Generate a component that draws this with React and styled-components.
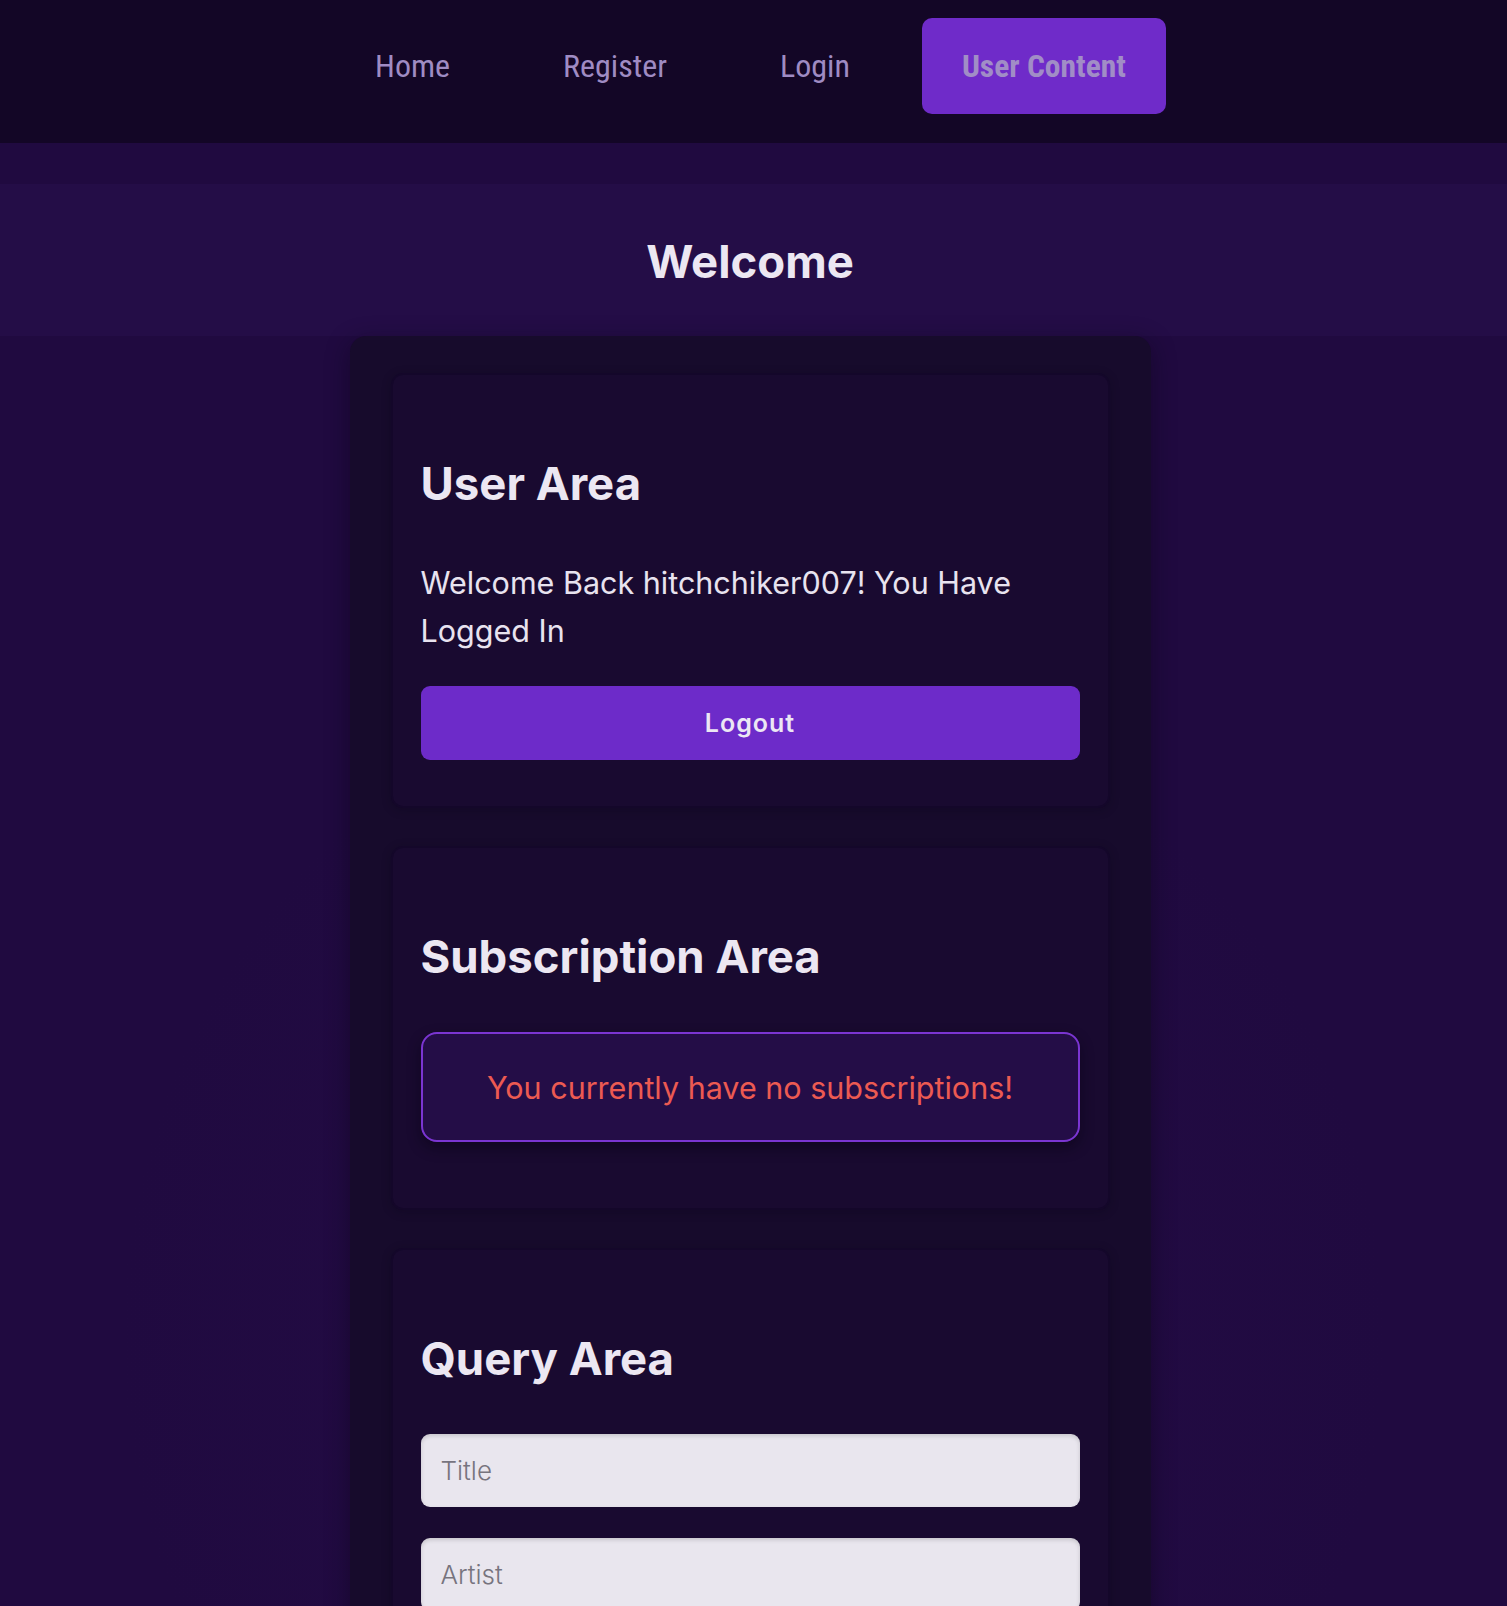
import React from "react";
import styled, { createGlobalStyle } from "styled-components";

const GlobalStyle = createGlobalStyle`
  * { box-sizing: border-box; }
  html, body {
    margin: 0;
    padding: 0;
    background: #200a40;
  }
  body {
    font-family: Inter, "Noto Sans", sans-serif;
    color: #ebe6f1;
    min-height: 100vh;
    background:
      radial-gradient(ellipse 60% 50% at 50% 70%, rgba(40, 14, 76, 0.55), rgba(32, 10, 64, 0) 70%),
      #200a40;
  }
`;

const Page = styled.div`
  display: flex;
  flex-direction: column;
  min-height: 100vh;
`;

const NavBar = styled.nav`
  background: #130626;
  padding: 18px 7px 29px 0;
  display: flex;
  justify-content: center;
  gap: 31px;
`;

const NavLink = styled.a`
  display: flex;
  align-items: center;
  justify-content: center;
  height: 96px;
  padding: 0 ${(p) => (p.$active ? 40 : 41)}px;
  border-radius: 10px;
  font-family: "Roboto Condensed", Roboto, sans-serif;
  font-stretch: condensed;
  font-size: ${(p) => (p.$active ? 31.5 : 32)}px;
  font-weight: ${(p) => (p.$active ? 700 : 400)};
  color: ${(p) => (p.$active ? "#a18dc6" : "#9f8bc3")};
  background: ${(p) => (p.$active ? "#6f2bc9" : "transparent")};
  text-decoration: none;
  cursor: pointer;
`;

const HeaderBand = styled.header`
  margin-top: 41px;
  background: #240d47;
  padding: 50px 7px 46px 0;
  text-align: center;
`;

const PageTitle = styled.h1`
  margin: 0;
  font-size: 45.5px;
  line-height: 56px;
  font-weight: 700;
  color: #ece7f2;
`;

const Panel = styled.main`
  align-self: center;
  width: 801px;
  margin-left: -7px;
  background: #170b2c;
  border-radius: 16px;
  padding: 37px 41px 60px;
  display: flex;
  flex-direction: column;
  gap: 38px;
  box-shadow: 0 6px 24px rgba(10, 2, 22, 0.45);
`;

const Card = styled.section`
  background: #190a30;
  border: 2px solid #14072a;
  border-radius: 12px;
  padding: 28px 28px ${(p) => p.$bottom || 28}px;
  display: flex;
  flex-direction: column;
  box-shadow: 0 2px 10px rgba(8, 2, 18, 0.25);
`;

const CardTitle = styled.h2`
  margin: 53px 0 47px;
  font-size: 45.5px;
  line-height: 56px;
  font-weight: 700;
  color: #ece7f2;
`;

const Message = styled.p`
  margin: 0 0 31px;
  font-size: 30.5px;
  line-height: 48px;
  font-weight: 400;
  color: #e8e3ef;
`;

const PrimaryButton = styled.button`
  height: 74px;
  width: 100%;
  border: none;
  border-radius: 9px;
  background: #6d2bc9;
  color: #ece7f4;
  font-family: Inter, sans-serif;
  font-size: 25px;
  font-weight: 600;
  letter-spacing: 1px;
  cursor: pointer;
`;

const NoticeBox = styled.div`
  height: 110px;
  border: 2px solid #7b35d2;
  border-radius: 16px;
  background: #240d47;
  display: flex;
  align-items: center;
  justify-content: center;
  font-size: 30.5px;
  color: #ec5a52;
  box-shadow: 0 6px 14px rgba(6, 1, 16, 0.45);
`;

const TextInput = styled.input`
  height: 73px;
  width: 100%;
  margin: 0 0 31px;
  border: none;
  border-radius: 9px;
  background: #e9e6ee;
  padding: 0 20px;
  font-family: Inter, sans-serif;
  font-size: 26px;
  font-weight: 300;
  color: #333;
  box-shadow: inset 0 2px 4px rgba(0, 0, 0, 0.15);
  outline: none;
  &::placeholder {
    color: #77747e;
  }
`;

export default function App() {
  return (
    <>
      <GlobalStyle />
      <Page>
        <NavBar>
          <NavLink>Home</NavLink>
          <NavLink>Register</NavLink>
          <NavLink>Login</NavLink>
          <NavLink $active>User Content</NavLink>
        </NavBar>
        <HeaderBand>
          <PageTitle>Welcome</PageTitle>
        </HeaderBand>
        <Panel>
          <Card $bottom={46}>
            <CardTitle>User Area</CardTitle>
            <Message>Welcome Back hitchchiker007! You Have Logged In</Message>
            <PrimaryButton>Logout</PrimaryButton>
          </Card>
          <Card $bottom={66}>
            <CardTitle>Subscription Area</CardTitle>
            <NoticeBox>You currently have no subscriptions!</NoticeBox>
          </Card>
          <Card>
            <CardTitle>Query Area</CardTitle>
            <TextInput placeholder="Title" />
            <TextInput placeholder="Artist" />
            <TextInput placeholder="Year" />
            <PrimaryButton>Query</PrimaryButton>
          </Card>
        </Panel>
      </Page>
    </>
  );
}
